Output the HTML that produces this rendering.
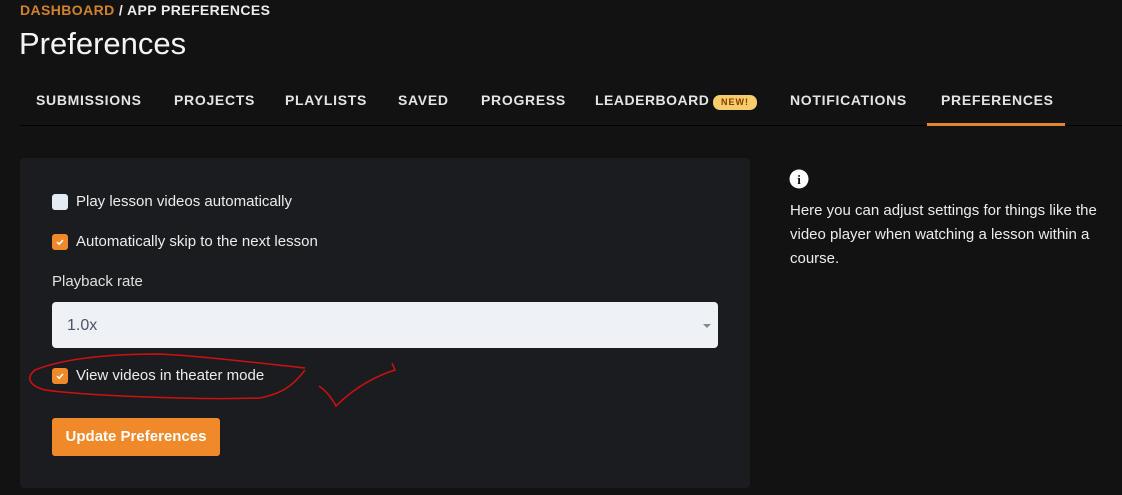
<!DOCTYPE html>
<html><head><style>
*{margin:0;padding:0;box-sizing:border-box}
body{width:1122px;height:495px;background:#121212;font-family:"Liberation Sans",sans-serif;color:#e8e8e8;position:relative;overflow:hidden}
.a{position:absolute;white-space:nowrap}
.tab{position:absolute;top:92px;font-size:14px;font-weight:bold;letter-spacing:0.7px;color:#e4e4e4}
.cb{position:absolute;left:52px;width:16px;height:16px;border-radius:3px;background:#f0892a}
.cb svg{position:absolute;left:3px;top:3px}
.lbl{position:absolute;left:76px;font-size:15px;color:#ececec}
</style></head><body>
<div class="a" style="left:20px;top:2px;font-size:14px;font-weight:bold;letter-spacing:0.4px;"><span style="color:#d0822e">DASHBOARD</span> <span style="color:#ececec">/ APP PREFERENCES</span></div>
<div class="a" style="left:19px;top:26px;font-size:31px;color:#f4f4f4">Preferences</div>
<div class="tab" style="left:36px">SUBMISSIONS</div>
<div class="tab" style="left:174px">PROJECTS</div>
<div class="tab" style="left:285px">PLAYLISTS</div>
<div class="tab" style="left:398px">SAVED</div>
<div class="tab" style="left:481px">PROGRESS</div>
<div class="tab" style="left:595px;letter-spacing:0.5px">LEADERBOARD</div>
<div class="a" style="left:713px;top:95px;width:44px;height:15px;border-radius:7px;background:#f6cd6a;color:#8a3b00;font-size:9px;font-weight:bold;letter-spacing:1px;text-align:center;line-height:15px">NEW!</div>
<div class="tab" style="left:790px">NOTIFICATIONS</div>
<div class="tab" style="left:941px">PREFERENCES</div>
<div class="a" style="left:20px;top:125px;width:1102px;height:1px;background:#000"></div>
<div class="a" style="left:927px;top:123px;width:138px;height:3px;background:#e0862f"></div>

<div class="a" style="left:20px;top:158px;width:730px;height:330px;background:#1b1c1f;border-radius:4px"></div>
<div class="cb" style="top:194px;background:#e5ebf3"></div>
<div class="lbl" style="top:193px">Play lesson videos automatically</div>
<div class="cb" style="top:234px"><svg width="10" height="10" viewBox="0 0 10 10"><path d="M2 5.2 L4.2 7.2 L8 3" stroke="#fff" stroke-width="1.6" fill="none"/></svg></div>
<div class="lbl" style="top:233px">Automatically skip to the next lesson</div>
<div class="a" style="left:52px;top:273px;font-size:15px;color:#e0e0e0">Playback rate</div>
<div class="a" style="left:52px;top:302px;width:666px;height:46px;background:#eef2f7;border-radius:4px"></div>
<div class="a" style="left:67px;top:317px;font-size:16px;color:#4a5568">1.0x</div>
<div class="a" style="left:703px;top:324px;width:0;height:0;border-left:4px solid transparent;border-right:4px solid transparent;border-top:4px solid #888"></div>
<div class="cb" style="top:368px"><svg width="10" height="10" viewBox="0 0 10 10"><path d="M2 5.2 L4.2 7.2 L8 3" stroke="#fff" stroke-width="1.6" fill="none"/></svg></div>
<div class="lbl" style="top:367px">View videos in theater mode</div>
<div class="a" style="left:52px;top:418px;width:168px;height:38px;background:#f0892a;border-radius:3px;color:#fff;font-size:15px;font-weight:bold;text-align:center;line-height:38px">Update Preferences</div>

<svg class="a" style="left:0;top:0" width="1122" height="495">
<path d="M305 368 C250 362 200 356 160 354 C100 354 60 360 35 370 C25 378 30 386 45 390 C90 396 200 400 260 398 C285 393 295 383 305 370" stroke="#d01010" stroke-width="1.5" fill="none"/>
<path d="M319 386 C325 390 332 398 336 406 C350 392 370 378 395 370 L392 363" stroke="#d01010" stroke-width="1.5" fill="none"/>
<circle cx="799" cy="179" r="9.5" fill="#fff"/>
<text x="799" y="184" text-anchor="middle" font-family="Liberation Serif" font-weight="bold" font-size="13" fill="#121212">i</text>
</svg>
<div class="a" style="left:790px;top:199px;font-size:15px;line-height:24px;color:#ececec;white-space:normal;width:332px">Here you can adjust settings for things like the video player when watching a lesson within a course.</div>
</body></html>
